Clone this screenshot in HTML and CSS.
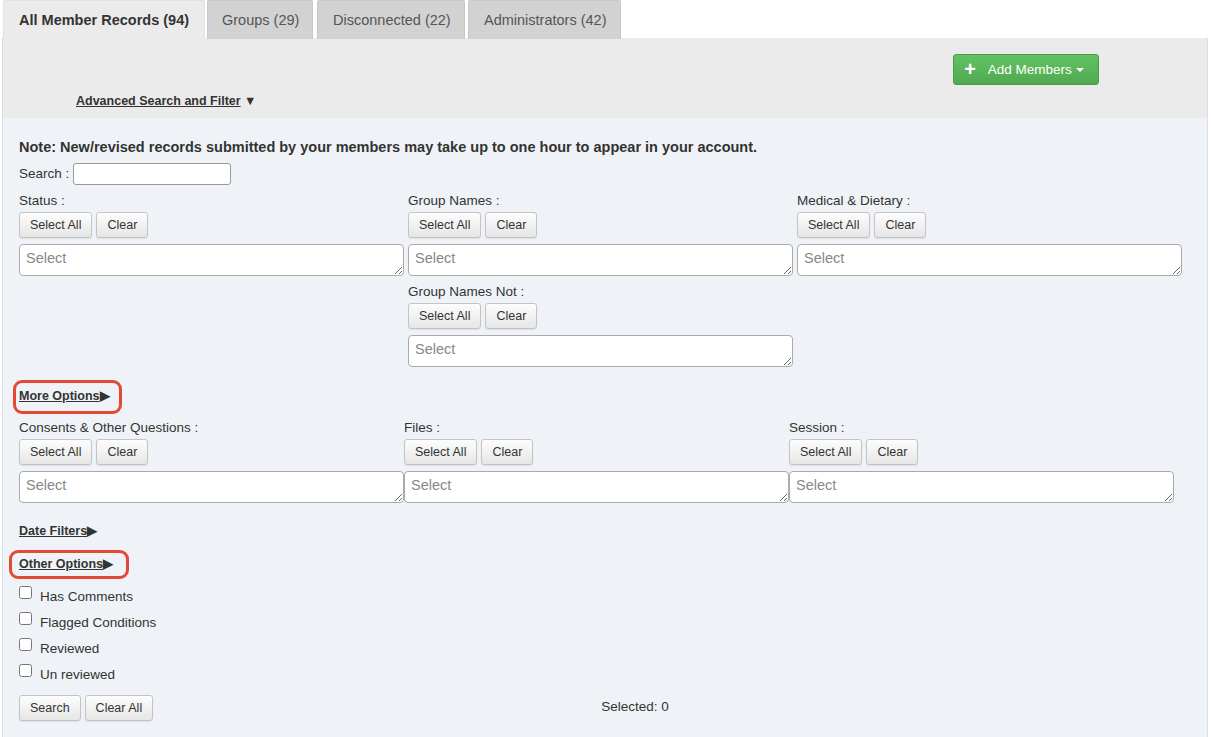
FILE: index.html
```html
<!DOCTYPE html>
<html>
<head>
<meta charset="utf-8">
<link rel="stylesheet" href="styles.css">
</head>
<body>
<div class="page">
  <ul class="tabs">
    <li class="tab active">All Member Records (94)</li>
    <li class="tab t2">Groups (29)</li>
    <li class="tab t3">Disconnected (22)</li>
    <li class="tab t4">Administrators (42)</li>
  </ul>
  <div class="panel">
    <div class="panel-head">
      <div class="head-row">
        <button class="btn-green"><span class="plus">+</span> Add Members <span class="caret"></span></button>
      </div>
      <a class="adv-link" href="#"><u>Advanced Search and Filter</u> ▼</a>
    </div>
    <div class="panel-body">
      <p class="note">Note: New/revised records submitted by your members may take up to one hour to appear in your account.</p>
      <div class="search-row">
        <label>Search :</label>
        <input class="search-input" type="text">
      </div>

      <div class="grid3">
        <div class="field">
          <div class="flabel">Status :</div>
          <div class="btns"><button class="btn">Select All</button><button class="btn">Clear</button></div>
          <textarea class="sel" placeholder="Select"></textarea>
        </div>
        <div class="field">
          <div class="flabel">Group Names :</div>
          <div class="btns"><button class="btn">Select All</button><button class="btn">Clear</button></div>
          <textarea class="sel" placeholder="Select"></textarea>
        </div>
        <div class="field">
          <div class="flabel">Medical &amp; Dietary :</div>
          <div class="btns"><button class="btn">Select All</button><button class="btn">Clear</button></div>
          <textarea class="sel" placeholder="Select"></textarea>
        </div>
        <div class="field"></div>
        <div class="field">
          <div class="flabel">Group Names Not :</div>
          <div class="btns"><button class="btn">Select All</button><button class="btn">Clear</button></div>
          <textarea class="sel" placeholder="Select"></textarea>
        </div>
      </div>

      <div class="toggle more"><span class="hl"><u>More Options</u>▶</span></div>

      <div class="grid3 tight">
        <div class="field">
          <div class="flabel">Consents &amp; Other Questions :</div>
          <div class="btns"><button class="btn">Select All</button><button class="btn">Clear</button></div>
          <textarea class="sel" placeholder="Select"></textarea>
        </div>
        <div class="field">
          <div class="flabel">Files :</div>
          <div class="btns"><button class="btn">Select All</button><button class="btn">Clear</button></div>
          <textarea class="sel" placeholder="Select"></textarea>
        </div>
        <div class="field">
          <div class="flabel">Session :</div>
          <div class="btns"><button class="btn">Select All</button><button class="btn">Clear</button></div>
          <textarea class="sel" placeholder="Select"></textarea>
        </div>
      </div>

      <div class="toggle date"><u>Date Filters</u>▶</div>
      <div class="toggle other"><span class="hl hl2"><u>Other Options</u>▶</span></div>

      <ul class="checks">
        <li><input type="checkbox"><span>Has Comments</span></li>
        <li><input type="checkbox"><span>Flagged Conditions</span></li>
        <li><input type="checkbox"><span>Reviewed</span></li>
        <li><input type="checkbox"><span>Un reviewed</span></li>
      </ul>

      <div class="footer-row">
        <div class="btns"><button class="btn">Search</button><button class="btn">Clear All</button></div>
        <div class="selected">Selected: 0</div>
      </div>
    </div>
  </div>
</div>
</body>
</html>
```

FILE: styles.css
```css
* { box-sizing: border-box; }
html, body { margin: 0; padding: 0; }
body {
  font-family: "Liberation Sans", Arial, Helvetica, sans-serif;
  color: #333;
  background: #fff;
  font-size: 13.5px;
}
.page { width: 1211px; height: 737px; overflow: hidden; }

.tabs {
  list-style: none; margin: 0; padding: 0 0 0 3px;
  display: flex; height: 39px; position: relative; z-index: 1;
}
.tab {
  height: 39px; line-height: 38px; padding: 0 0 0 15px;
  font-size: 14.5px; color: #555;
  background: #d2d2d2;
  border: 1px solid #c8c8c8; border-bottom: none;
  border-radius: 2px 2px 0 0;
}
.tab.active {
  background: #ebebeb; color: #333; font-weight: bold;
  border-color: #e2e2e2;
  width: 202px;
}
.tab.t2 { width: 106px; margin-left: 2px; padding-left: 14px; }
.tab.t3 { width: 148px; margin-left: 4px; }
.tab.t4 { width: 153px; margin-left: 3px; }

.panel {
  margin: -1px 3px 0 2px;
  border: 1px solid #d6dfe6;
  border-top: none;
  height: 699px;
}
.panel-head {
  background: #ebebeb;
  height: 80px;
  padding: 16px 108px 0 73px;
}
.head-row { display: flex; justify-content: flex-end; height: 31px; }
.btn-green {
  font-family: inherit; font-size: 13.5px; color: #fff;
  width: 146px; height: 31px;
  background: linear-gradient(#62c462, #51a851);
  border: 1px solid #4a9a4a; border-radius: 3px;
  display: flex; align-items: center; justify-content: center; gap: 6px;
  padding: 0 10px 0 6px;
}
.plus { font-weight: bold; font-size: 20px; line-height: 1; margin-right: 6px; margin-top: -2px; }
.caret {
  display: inline-block; width: 0; height: 0;
  border-left: 4px solid transparent; border-right: 4px solid transparent;
  border-top: 4px solid #fff; margin-left: -2px;
}
.adv-link {
  display: inline-block; margin-top: 8px; line-height: 16px;
  font-size: 12.5px; font-weight: bold; color: #333; text-decoration: none;
}

.panel-body {
  background: #eff3f7;
  height: 619px;
  padding: 19px 16px 0 16px;
}
.note { margin: 0; font-size: 14.5px; font-weight: bold; line-height: 20px; }
.search-row { display: flex; align-items: center; gap: 4px; margin-top: 6px; height: 22px; }
.search-row label { margin-top: -2px; }
.search-input {
  width: 158px; height: 22px;
  border: 1px solid #999; border-radius: 3px; background: #fff;
}

.grid3 {
  display: grid; grid-template-columns: 389px 389px 389px;
  row-gap: 8px; margin-top: 8px;
}
.grid3.tight { grid-template-columns: 385px 385px 385px; margin-top: 6px; }
.flabel { line-height: 16px; height: 16px; }
.btns { display: flex; gap: 4px; margin-top: 3px; }
.btn {
  font-family: inherit; font-size: 12.5px; color: #333;
  height: 26px; padding: 0 10px;
  background: linear-gradient(#fdfdfd, #e6e6e6);
  border: 1px solid #c4c4c4; border-radius: 3px;
  box-shadow: 0 1px 1px rgba(0,0,0,0.08);
}
.sel {
  display: block; width: 385px; height: 32px; margin-top: 6px;
  border: 1px solid #aaa; border-radius: 4px; background: #fff;
  font-family: inherit; font-size: 14.5px; padding: 5px 6px; resize: vertical;
}
.sel::placeholder { color: #888; }

.toggle { font-size: 12.5px; font-weight: bold; color: #333; line-height: 16px; }
.toggle.more { margin-top: 13px; height: 34px; display: flex; align-items: center; }
.hl {
  display: flex; align-items: center; height: 34px;
  margin-left: -6px; padding: 0 9px 3px 3px;
  border: 3px solid #e34a35; border-radius: 9px;
}
.toggle.date { margin-top: 20px; height: 16px; }
.toggle.other { margin-top: 11px; height: 29px; display: flex; align-items: center; }
.hl2 { height: 29px; margin-left: -10px; padding: 0 13px 1px 7px; }

.checks { list-style: none; margin: 6px 0 0; padding: 0; }
.checks li { height: 26px; display: flex; align-items: flex-start; }
.checks input { margin: 1px 8px 0 0; width: 13px; height: 13px; }
.checks span { margin-top: 4px; line-height: 16px; }

.footer-row { display: flex; margin-top: 3px; align-items: flex-start; }
.selected { margin-left: 448px; margin-top: 7px; line-height: 16px; }
```
